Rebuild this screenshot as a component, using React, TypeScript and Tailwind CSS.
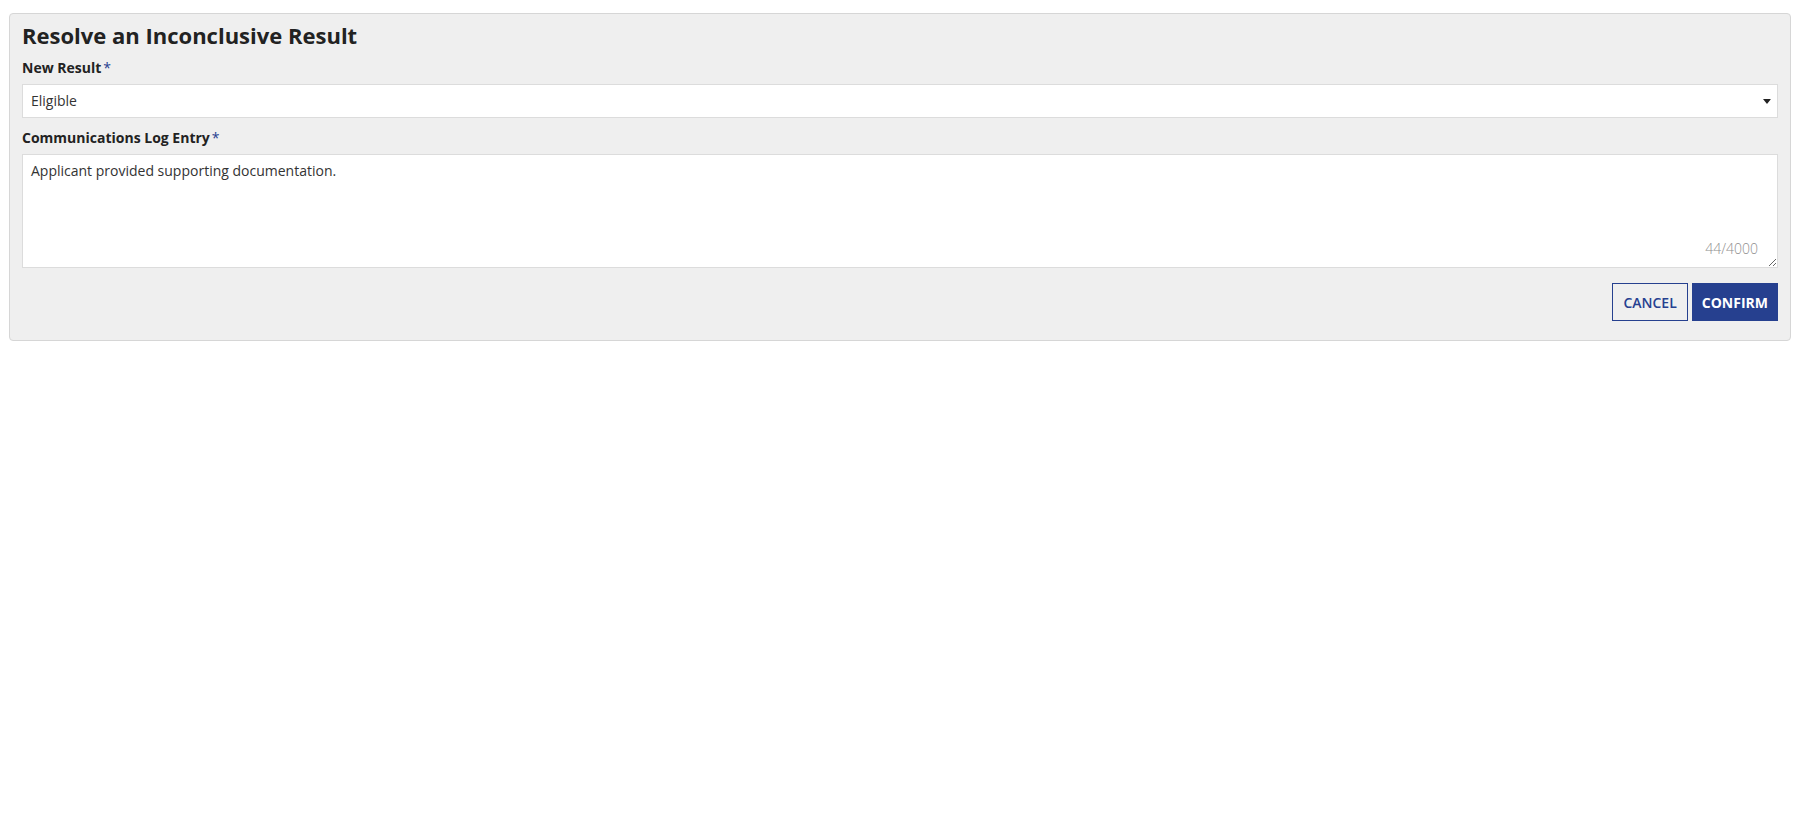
import { useState } from "react";

const MAX_CHARS = 4000;

export default function App() {
  const [result, setResult] = useState("Eligible");
  const [note, setNote] = useState("Applicant provided supporting documentation.");

  return (
    <main className="min-h-screen bg-white pt-[13px] pl-[9px] pr-[18px] font-['Open_Sans',sans-serif] text-[#222]">
      <section className="rounded-[4px] border border-[#d6d6d6] bg-[#efefef] px-[12px] pt-[7px] pb-[19px]">
        <h1 className="mb-[9px] text-[22px] font-bold leading-[28px] text-[#222]">
          Resolve an Inconclusive Result
        </h1>

        {/* Result picker */}
        <label className="mb-[6px] block text-[14px] font-bold leading-[20px]">
          New Result<span className="ml-[2px] font-normal text-[#26408f]">*</span>
        </label>
        <div className="relative mb-[10px]">
          <select
            value={result}
            onChange={(e) => setResult(e.target.value)}
            className="block h-[34px] w-full appearance-none border border-[#dcdcdc] bg-white py-[6px] pl-[8px] pr-[24px] text-[14px] leading-[20px] text-[#333] outline-none"
          >
            <option>Eligible</option>
            <option>Ineligible</option>
            <option>Inconclusive</option>
          </select>
          <svg
            className="pointer-events-none absolute right-[7px] top-[15px] h-[5px] w-[8px]"
            viewBox="0 0 8 5"
            fill="#222"
          >
            <path d="M0 0.6 Q0 0 0.6 0 H7.4 Q8 0 7.6 0.5 L4.4 4.6 Q4 5 3.6 4.6 L0.4 0.5 Z" />
          </svg>
        </div>

        {/* Log entry */}
        <label className="mb-[6px] block text-[14px] font-bold leading-[20px]">
          Communications Log Entry<span className="ml-[2px] font-normal text-[#26408f]">*</span>
        </label>
        <div className="relative">
          <textarea
            value={note}
            maxLength={MAX_CHARS}
            onChange={(e) => setNote(e.target.value)}
            className="block h-[114px] w-full border border-[#dcdcdc] bg-white px-[8px] py-[6px] text-[14px] leading-[20px] text-[#333] outline-none"
          />
          <span className="pointer-events-none absolute bottom-[9px] right-[20px] text-[14px] font-light leading-[20px] text-[#8e8e8e]">
            {note.length}/{MAX_CHARS}
          </span>
        </div>

        <div className="mt-[15px] flex justify-end gap-[4px]">
          <button className="h-[38px] border border-[#26408f] bg-transparent px-[10px] text-[14px] font-semibold uppercase text-[#26408f]">
            Cancel
          </button>
          <button className="h-[38px] border border-[#26408f] bg-[#26408f] px-[9px] text-[14px] font-bold uppercase text-white">
            Confirm
          </button>
        </div>
      </section>
    </main>
  );
}
